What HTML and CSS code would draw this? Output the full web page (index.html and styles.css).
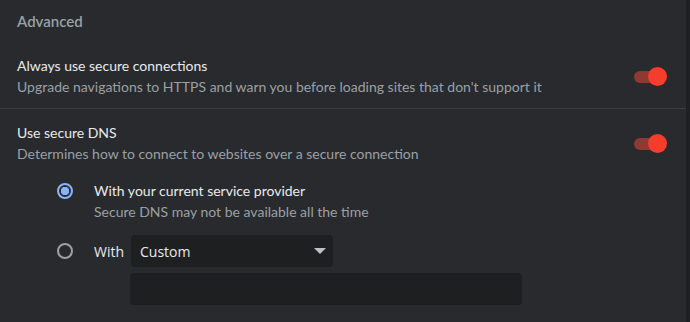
FILE: index.html
```html
<!DOCTYPE html>
<html lang="en">
<head>
    <meta charset="UTF-8">
    <title>Advanced settings</title>
    <link rel="stylesheet" href="styles.css">
</head>
<body>
    <div class="page">
        <h2 class="section-title">Advanced</h2>

        <div class="setting">
            <div class="setting-text">
                <div class="label">Always use secure connections</div>
                <div class="sublabel">Upgrade navigations to HTTPS and warn you before loading sites that don't support it</div>
            </div>
            <span class="toggle"><span class="knob"></span></span>
        </div>

        <div class="setting separated">
            <div class="setting-text">
                <div class="label">Use secure DNS</div>
                <div class="sublabel">Determines how to connect to websites over a secure connection</div>
            </div>
            <span class="toggle"><span class="knob"></span></span>
        </div>

        <div class="options">
            <div class="option">
                <span class="radio checked"></span>
                <div class="setting-text">
                    <div class="label">With your current service provider</div>
                    <div class="sublabel">Secure DNS may not be available all the time</div>
                </div>
            </div>
            <div class="option custom">
                <span class="radio"></span>
                <div class="custom-fields">
                    <div class="custom-row">
                        <span class="with">With</span>
                        <div class="select">
                            <span>Custom</span>
                            <span class="arrow"></span>
                        </div>
                    </div>
                    <div class="text-input"></div>
                </div>
            </div>
        </div>
    </div>
</body>
</html>
```

FILE: styles.css
```css
body {
    margin: 0;
    background-color: #1f2023;
    font-family: Lato, "Noto Sans", sans-serif;
}
.page {
    width: 686px;
    height: 322px;
    background-color: #292a2d;
    overflow: hidden;
}
.section-title {
    margin: 0;
    padding: 11px 17px 0;
    font-size: 15px;
    font-weight: 600;
    line-height: 20px;
    color: #9aa0a6;
}
.setting {
    display: flex;
    align-items: center;
    padding: 25px 20px 11px 17px;
}
.setting.separated {
    border-top: 1px solid #3c3d40;
    padding-top: 14px;
    padding-bottom: 0;
}
.setting-text {
    flex: 1;
}
.label {
    font-size: 14px;
    line-height: 20px;
    color: #e8eaed;
}
.sublabel {
    font-size: 14px;
    line-height: 21px;
    color: #9aa0a6;
}
.toggle {
    position: relative;
    width: 30px;
    height: 12px;
    margin-right: 2px;
    border-radius: 6px;
    background-color: #8e3a32;
}
.knob {
    position: absolute;
    top: -4px;
    right: -3px;
    width: 19px;
    height: 19px;
    border-radius: 50%;
    background-color: #f43d2b;
}
.options {
    padding: 17px 0 0 57px;
}
.option {
    display: flex;
    align-items: flex-start;
    gap: 21px;
}
.radio {
    flex: none;
    box-sizing: border-box;
    width: 16px;
    height: 16px;
    margin-top: 2px;
    border: 2px solid #9aa0a6;
    border-radius: 50%;
}
.radio.checked {
    border-color: #8ab4f8;
    background: radial-gradient(circle, #8ab4f8 0 4px, transparent 4.5px);
}
.option.custom {
    margin-top: 13px;
}
.option.custom .radio {
    margin-top: 8px;
}
.custom-fields {
    display: flex;
    flex-direction: column;
    gap: 6px;
}
.custom-row {
    display: flex;
    align-items: center;
    gap: 7px;
}
.with,
.select {
    font-family: "Open Sans", sans-serif;
    font-size: 14px;
    color: #e8eaed;
}
.select {
    display: flex;
    align-items: center;
    justify-content: space-between;
    box-sizing: border-box;
    width: 202px;
    height: 32px;
    padding: 0 7px 0 9px;
    border-radius: 4px;
    background-color: #1e1f21;
}
.arrow {
    width: 0;
    height: 0;
    border-left: 6px solid transparent;
    border-right: 6px solid transparent;
    border-top: 6px solid #bdc1c6;
}
.text-input {
    width: 392px;
    height: 32px;
    margin-left: 36px;
    border-radius: 4px;
    background-color: #1e1f21;
}
```
